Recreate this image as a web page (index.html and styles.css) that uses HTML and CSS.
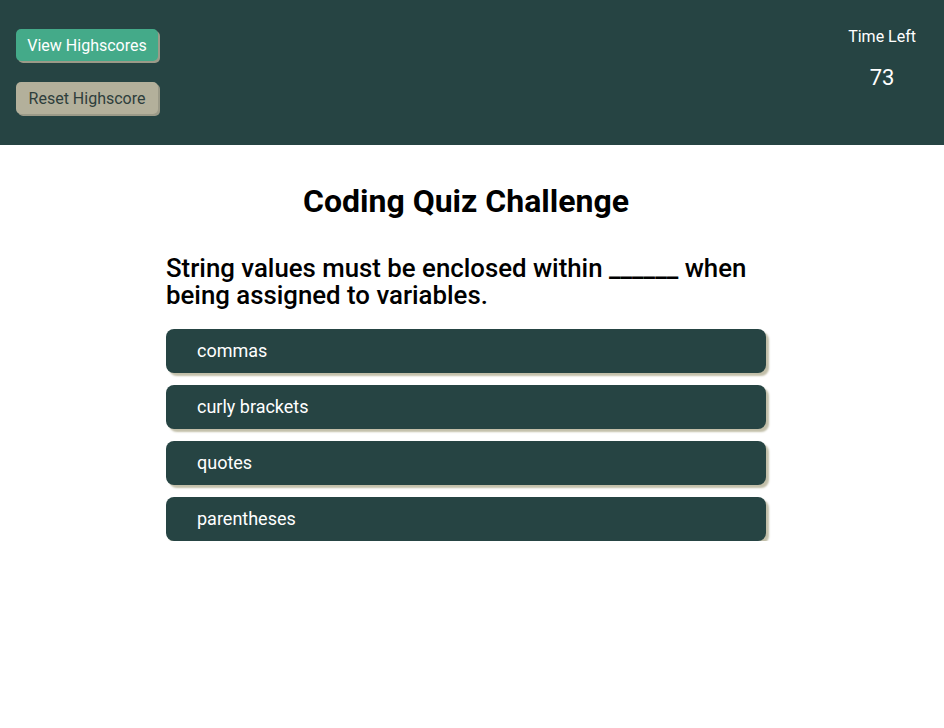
FILE: index.html
```html
<!DOCTYPE html>
<html>
<head>
<meta charset="utf-8">
<link rel="stylesheet" href="styles.css">
</head>
<body>
<header class="header">
  <div class="header-buttons">
    <button class="btn btn-view">View Highscores</button>
    <button class="btn btn-reset">Reset Highscore</button>
  </div>
  <div class="timer">
    <div class="timer-label">Time Left</div>
    <div class="timer-value">73</div>
  </div>
</header>
<main class="main">
  <h1 class="title">Coding Quiz Challenge</h1>
  <section class="quiz">
    <h2 class="question">String values must be enclosed within ______ when being assigned to variables.</h2>
    <ul class="answers">
      <li class="answer">commas</li>
      <li class="answer">curly brackets</li>
      <li class="answer">quotes</li>
      <li class="answer">parentheses</li>
    </ul>
  </section>
</main>
</body>
</html>
```
FILE: styles.css
```css
* { box-sizing: border-box; }
body {
  margin: 0;
  font-family: Roboto, "Liberation Sans", sans-serif;
  background: #fff;
  color: #000;
}
.header {
  background: #264443;
  height: 145px;
  display: flex;
  justify-content: space-between;
  padding: 29px 28px 0 16px;
}
.header-buttons {
  display: flex;
  flex-direction: column;
  align-items: flex-start;
  gap: 21px;
}
.btn {
  font-family: Roboto, "Liberation Sans", sans-serif;
  font-size: 16px;
  height: 32px;
  width: 142px;
  padding: 0;
  border: none;
  border-radius: 5px;
  box-shadow: 2px 2px 0 #9b9a88;
}
.btn-view {
  background: #44aa89;
  color: #fff;
}
.btn-reset {
  background: #b3b09b;
  color: #2e3e3c;
}
.timer {
  color: #fff;
  text-align: center;
}
.timer-label {
  font-size: 16px;
  line-height: 16px;
}
.timer-value {
  font-size: 22px;
  margin-top: 20px;
}
.main {
  display: flex;
  flex-direction: column;
  align-items: center;
  padding-right: 12px;
}
.title {
  font-size: 32px;
  font-weight: 700;
  margin: 38px 0 0;
  line-height: 36px;
}
.quiz {
  width: 600px;
  margin-top: 36px;
}
.question {
  font-size: 25.8px;
  font-weight: 500;
  line-height: 27px;
  margin: 0 0 20px;
}
.answers {
  list-style: none;
  padding: 0;
  margin: 0;
  display: flex;
  flex-direction: column;
  gap: 12px;
}
.answer {
  background: #264443;
  color: #fff;
  height: 44px;
  border-radius: 8px;
  padding: 0 0 2px 31px;
  font-size: 18px;
  display: flex;
  align-items: center;
  box-shadow: 3px 3px 2px #c2bfa9;
}
```
